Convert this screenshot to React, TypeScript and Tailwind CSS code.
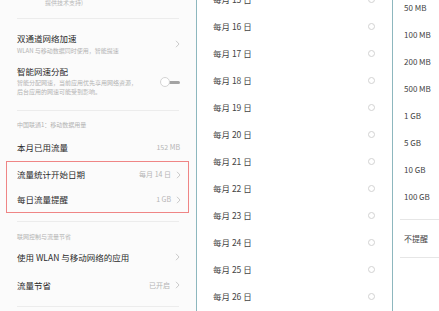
import React from 'react'

const font = { fontFamily: '"Noto Sans CJK SC", "Noto Sans", sans-serif' }

function Chevron() {
  return (
    <svg width="5" height="8" viewBox="0 0 5 8" className="block shrink-0">
      <polyline points="1,0.8 4,4 1,7.2" fill="none" stroke="#c4c4c4" strokeWidth="0.9" />
    </svg>
  )
}

function Toggle() {
  return (
    <div className="relative h-[10px] w-[20px] shrink-0">
      <div className="absolute left-[6px] top-[3.5px] h-[3px] w-[14px] rounded-full bg-[#a3a3a3]" />
      <div className="absolute left-0 top-0 h-[10px] w-[10px] rounded-full border border-[#d4d4d4] bg-white" />
    </div>
  )
}

function Radio() {
  return <div className="h-[7px] w-[7px] shrink-0 rounded-full border border-[#d2d2d2] bg-white" />
}

const days = [15, 16, 17, 18, 19, 20, 21, 22, 23, 24, 25, 26]
const sizes = ['50 MB', '100 MB', '200 MB', '500 MB', '1 GB', '5 GB', '10 GB', '100 GB']

export default function App() {
  return (
    <div className="flex h-[311px] w-[439px] overflow-hidden bg-white" style={font}>
      {/* left: settings */}
      <div className="w-[197px] shrink-0 overflow-hidden border-r border-[#8db7be] bg-[#fbfbfb] text-[#2a2a2a]">
        <div className="h-[18px] pl-[45px] text-[6px] leading-[6px] text-[#b8b8b8]">提供技术支持)</div>
        <div className="mx-[17px] h-px bg-[#ececec]" />

        <div className="flex items-start justify-between pl-[17px] pr-[16px] pt-[14px]">
          <div>
            <div className="text-[8.5px] leading-[10px]">双通道网络加速</div>
            <div className="mt-[4px] text-[6px] leading-[7px] text-[#b3b3b3]">WLAN 与移动数据同时使用，智能提速</div>
          </div>
          <div className="mt-[7px]">
            <Chevron />
          </div>
        </div>

        <div className="mt-[12px] flex items-start justify-between pl-[17px] pr-[16px]">
          <div>
            <div className="text-[8.5px] leading-[10px]">智能网速分配</div>
            <div className="mt-[2px] text-[6px] leading-[9px] text-[#b3b3b3]">
              智能分配网速，当前应用优先享用网络资源，
              <br />
              后台应用的网速可能受到影响。
            </div>
          </div>
          <div className="mt-[11px]">
            <Toggle />
          </div>
        </div>

        <div className="mx-[17px] mt-[14px] h-px bg-[#ececec]" />
        <div className="mt-[10px] pl-[17px] text-[6px] leading-[7px] text-[#b3b3b3]">中国联通1：移动数据用量</div>
        <div className="mt-[14px] flex items-center justify-between pl-[17px] pr-[16px]">
          <span className="text-[8.5px] leading-[10px]">本月已用流量</span>
          <span className="text-[7px] leading-[10px] text-[#b5b5b5]">152 MB</span>
        </div>

        <div className="ml-[6px] mt-[9px] w-[183px] border border-[#ef8585]">
          <div className="flex h-[25px] items-center justify-between pl-[10px] pr-[7px]">
            <span className="text-[8.5px]">流量统计开始日期</span>
            <div className="flex items-center gap-[5px]">
              <span className="text-[7px] text-[#b5b5b5]">每月 14 日</span>
              <Chevron />
            </div>
          </div>
          <div className="flex h-[25px] items-center justify-between pl-[10px] pr-[7px]">
            <span className="text-[8.5px]">每日流量提醒</span>
            <div className="flex items-center gap-[5px]">
              <span className="text-[7px] text-[#b5b5b5]">1 GB</span>
              <Chevron />
            </div>
          </div>
        </div>

        <div className="mx-[17px] mt-[8px] h-px bg-[#ececec]" />
        <div className="mt-[11px] pl-[17px] text-[6px] leading-[7px] text-[#b3b3b3]">联网控制与流量节省</div>
        <div className="mt-[12px] flex items-center justify-between pl-[17px] pr-[16px]">
          <span className="text-[8.5px] leading-[10px]">使用 WLAN 与移动网络的应用</span>
          <Chevron />
        </div>
        <div className="mt-[18px] flex items-center justify-between pl-[17px] pr-[16px]">
          <span className="text-[8.5px] leading-[10px]">流量节省</span>
          <div className="flex items-center gap-[5px]">
            <span className="text-[7px] leading-[10px] text-[#b5b5b5]">已开启</span>
            <Chevron />
          </div>
        </div>
        <div className="mx-[17px] mt-[16px] h-px bg-[#ececec]" />
      </div>

      {/* middle: start day */}
      <div className="w-[196px] shrink-0 overflow-hidden border-r border-[#8db7be] bg-white">
        <div className="-mt-[14px]">
          {days.map((d) => (
            <div key={d} className="flex h-[27px] items-center justify-between pl-[16px] pr-[17px]">
              <span className="text-[8.5px] text-[#444]">每月 {d} 日</span>
              <Radio />
            </div>
          ))}
        </div>
      </div>

      {/* right: daily reminder */}
      <div className="flex-1 overflow-hidden bg-white">
        <div className="-mt-[6px]">
          {sizes.map((s) => (
            <div key={s} className="flex h-[27px] items-center whitespace-nowrap pl-[11px] text-[8px] text-[#444]">
              {s}
            </div>
          ))}
        </div>
        <div className="ml-[7px] mt-[9px] h-px bg-[#e6e6e6]" />
        <div className="flex h-[37px] items-center whitespace-nowrap pl-[11px] text-[8px] text-[#444]">不提醒</div>
        <div className="ml-[7px] h-px bg-[#e6e6e6]" />
      </div>
    </div>
  )
}
